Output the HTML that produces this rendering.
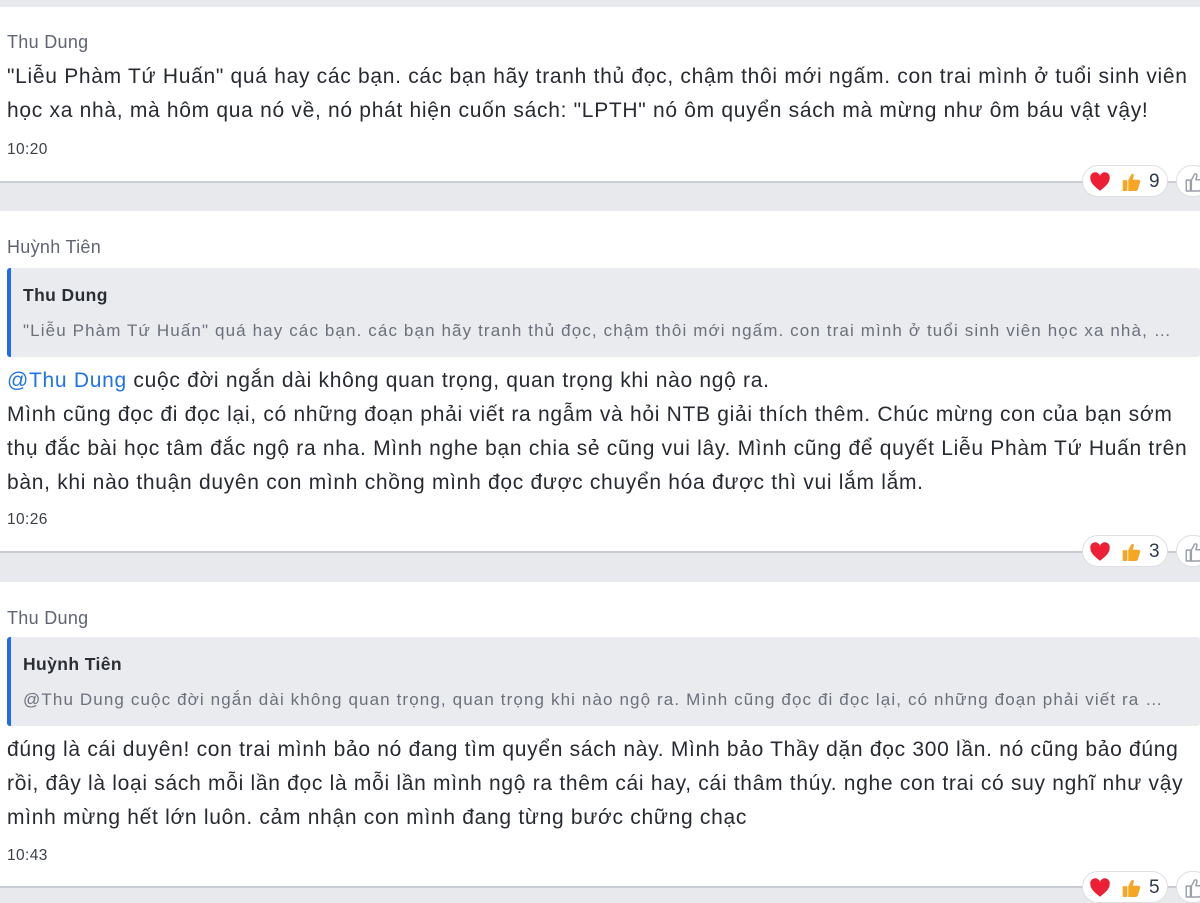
<!DOCTYPE html>
<html><head><meta charset="utf-8"><style>
*{margin:0;padding:0;box-sizing:border-box}
body{width:1200px;height:900px;overflow:hidden;background:#e8e9ed;font-family:"Liberation Sans","DejaVu Sans",sans-serif;position:relative}
.card{position:absolute;left:0;width:1200px;background:#fff;border-bottom:2px solid #c9ccd3}
.t{position:absolute;left:7px;white-space:nowrap}
.name{font-size:18px;color:#5f6571;letter-spacing:0.3px}
.body{font-size:21px;color:#272b31;line-height:34px;letter-spacing:0.7px}
.time{font-size:15.5px;color:#3c4148;letter-spacing:0.4px}
.quote{position:absolute;left:7px;width:1193px;height:89px;background:#eaebef;border-left:4px solid #1c6cf2;border-radius:3px}
.qn{position:absolute;left:12px;top:17px;font-size:17.5px;font-weight:bold;color:#2a2e35;letter-spacing:0.4px}
.qt{position:absolute;left:12px;top:53px;font-size:17px;color:#6b707b;white-space:nowrap;letter-spacing:1.12px}
.pill{position:absolute;left:1082px;width:86px;height:32px;background:#fff;border:1px solid #dcdfe4;border-radius:16px;font-size:19px;color:#2e3a4d}
.pill svg{position:absolute;top:5px}
.pill .n{position:absolute;left:66px;top:5px}
.like{position:absolute;left:1176px;width:34px;height:32px;background:#fff;border:1px solid #dcdfe4;border-radius:16px}
.like svg{position:absolute;left:7px;top:5px}
.at{color:#1f74e8}
</style></head><body>

<svg width="0" height="0" style="position:absolute">
<defs>
<symbol id="heart" viewBox="0 0 24 24"><path d="M12 21.5C5 16 1.5 12.5 1.5 8A5.2 5.2 0 0 1 12 5.5 5.2 5.2 0 0 1 22.5 8c0 4.5-3.5 8-10.5 13.5z" fill="#ec1f35"/></symbol>
<symbol id="thumb" viewBox="0 0 24 24"><path d="M9 10 L12.5 3.5 C14 2.5 15.5 3.5 15 5.5 L14 9.5 H20 C21.5 9.5 22.3 11 21.8 12.5 L19.5 20 C19 21.2 18 21.8 17 21.8 H9z" fill="#f6a623"/><rect x="3" y="10" width="5" height="11.8" rx="1" fill="#f6a623"/></symbol>
<symbol id="tout" viewBox="0 0 24 24"><path d="M8 10 L11.5 3.5 C13 2.5 14.5 3.5 14 5.5 L13 9.5 H19 C20.5 9.5 21.3 11 20.8 12.5 L18.5 20 C18 21.2 17 21.8 16 21.8 H8z M2.5 10 H7 V21.8 H2.5z" fill="none" stroke="#9aa0a8" stroke-width="1.6" stroke-linejoin="round"/></symbol>
</defs></svg>

<div class="card" style="top:7px;height:176px"></div>
<div class="t name" style="top:32px">Thu Dung</div>
<div class="t body" style="top:60px">"Liễu Phàm Tứ Huấn" quá hay các bạn. các bạn hãy tranh thủ đọc, chậm thôi mới ngấm. con trai mình ở tuổi sinh viên<br>học xa nhà, mà hôm qua nó về, nó phát hiện cuốn sách: "LPTH" nó ôm quyển sách mà mừng như ôm báu vật vậy!</div>
<div class="t time" style="top:141px">10:20</div>
<div class="pill" style="top:165px"><svg style="left:6px" width="22" height="22"><use href="#heart"/></svg><svg style="left:37px" width="22" height="22"><use href="#thumb"/></svg><span class="n">9</span></div>
<div class="like" style="top:165px"><svg width="22" height="22"><use href="#tout"/></svg></div>

<div class="card" style="top:211px;height:342px"></div>
<div class="t name" style="top:237px">Huỳnh Tiên</div>
<div class="quote" style="top:268px"><div class="qn">Thu Dung</div><div class="qt">"Liễu Phàm Tứ Huấn" quá hay các bạn. các bạn hãy tranh thủ đọc, chậm thôi mới ngấm. con trai mình ở tuổi sinh viên học xa nhà, …</div></div>
<div class="t body" style="top:364px"><span class="at">@Thu Dung</span> cuộc đời ngắn dài không quan trọng, quan trọng khi nào ngộ ra.<br>Mình cũng đọc đi đọc lại, có những đoạn phải viết ra ngẫm và hỏi NTB giải thích thêm. Chúc mừng con của bạn sớm<br>thụ đắc bài học tâm đắc ngộ ra nha. Mình nghe bạn chia sẻ cũng vui lây. Mình cũng để quyết Liễu Phàm Tứ Huấn trên<br>bàn, khi nào thuận duyên con mình chồng mình đọc được chuyển hóa được thì vui lắm lắm.</div>
<div class="t time" style="top:511px">10:26</div>
<div class="pill" style="top:535px"><svg style="left:6px" width="22" height="22"><use href="#heart"/></svg><svg style="left:37px" width="22" height="22"><use href="#thumb"/></svg><span class="n">3</span></div>
<div class="like" style="top:535px"><svg width="22" height="22"><use href="#tout"/></svg></div>

<div class="card" style="top:582px;height:306px"></div>
<div class="t name" style="top:608px">Thu Dung</div>
<div class="quote" style="top:637px"><div class="qn">Huỳnh Tiên</div><div class="qt">@Thu Dung cuộc đời ngắn dài không quan trọng, quan trọng khi nào ngộ ra. Mình cũng đọc đi đọc lại, có những đoạn phải viết ra …</div></div>
<div class="t body" style="top:733px">đúng là cái duyên! con trai mình bảo nó đang tìm quyển sách này. Mình bảo Thầy dặn đọc 300 lần. nó cũng bảo đúng<br>rồi, đây là loại sách mỗi lần đọc là mỗi lần mình ngộ ra thêm cái hay, cái thâm thúy. nghe con trai có suy nghĩ như vậy<br>mình mừng hết lớn luôn. cảm nhận con mình đang từng bước chững chạc</div>
<div class="t time" style="top:847px">10:43</div>
<div class="pill" style="top:871px"><svg style="left:6px" width="22" height="22"><use href="#heart"/></svg><svg style="left:37px" width="22" height="22"><use href="#thumb"/></svg><span class="n">5</span></div>
<div class="like" style="top:871px"><svg width="22" height="22"><use href="#tout"/></svg></div>
</body></html>
